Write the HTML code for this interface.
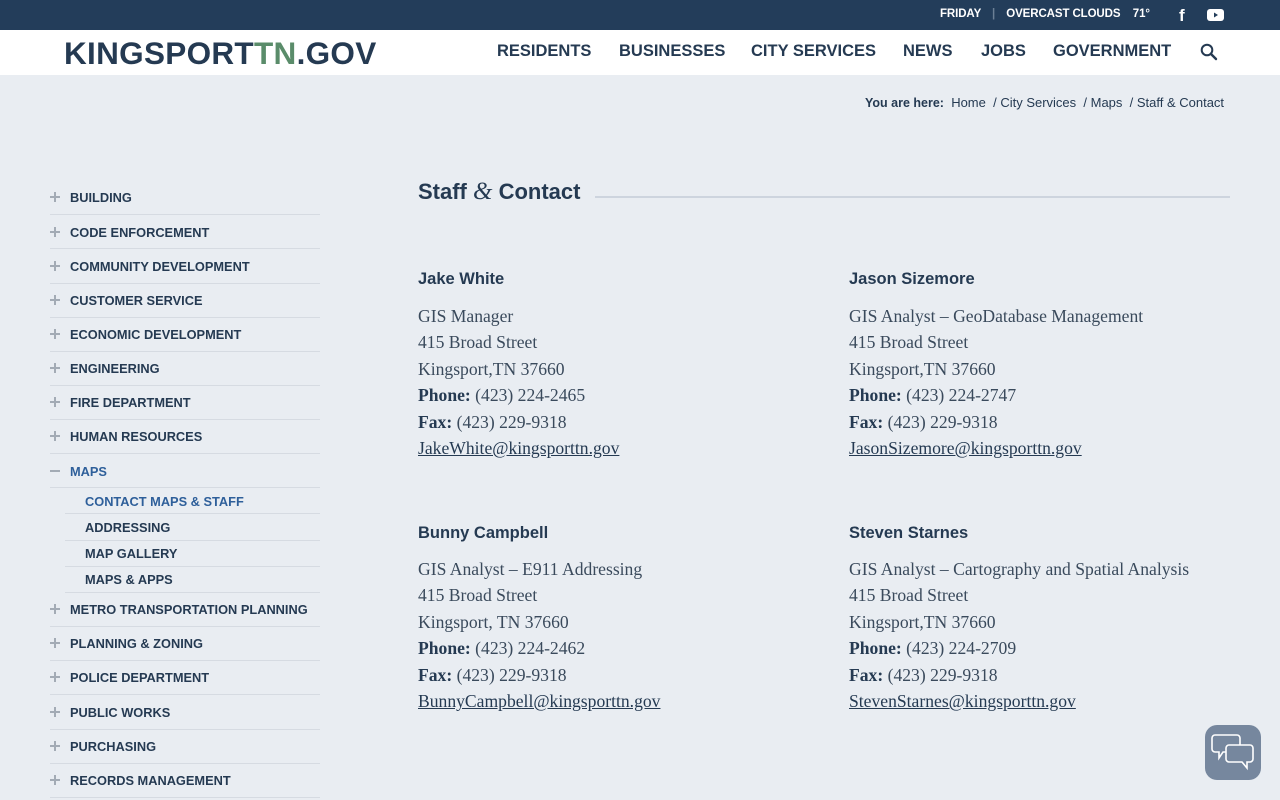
<!DOCTYPE html>
<html><head><meta charset="utf-8"><style>
*{margin:0;padding:0;box-sizing:border-box}
body{width:1280px;height:800px;overflow:hidden;background:#e9edf2;font-family:"Liberation Sans",sans-serif;color:#253a52;position:relative}
.a{position:absolute;white-space:nowrap}
.top{position:absolute;left:0;top:0;width:1280px;height:30px;background:#233d5a}
.hdr{position:absolute;left:0;top:30px;width:1280px;height:45px;background:#fff}
.nav{font-weight:bold;font-size:16.5px;top:42px;color:#253a52}
.mi{font-weight:bold;font-size:12.8px;left:70px;color:#253a52}
.pl{position:absolute;left:50px;width:10px;height:10px}
.pl:before{content:"";position:absolute;left:0;top:4px;width:10px;height:2px;background:#a3abb5}
.pl:after{content:"";position:absolute;left:4px;top:0;width:2px;height:10px;background:#a3abb5}
.ln{position:absolute;height:1px;background:#d6dbe2;width:270px;left:50px}
.sub{left:85px}
.c{font-family:"Liberation Serif",serif;font-size:17.6px;color:#3a4a5c;line-height:26.4px}
.c b{color:#253a52}
.c u{color:#253a52}
.nm{font-weight:bold;font-size:16.5px;color:#253a52}
</style></head><body>
<div class="top"></div>
<div class="a" style="left:940px;top:8px;color:#fff;font-weight:bold;font-size:11.5px;letter-spacing:-0.1px">FRIDAY <span style="color:#6b7f95;margin:0 8px">|</span> OVERCAST CLOUDS &nbsp;&nbsp;&nbsp;71°</div>
<div class="a" style="left:1179px;top:6px;color:#fff;font-weight:bold;font-size:17px">f</div>
<svg class="a" style="left:1207px;top:9px" width="17" height="12" viewBox="0 0 17 12"><rect width="17" height="12" rx="3" fill="#fff"/><path d="M7 3.5L11 6L7 8.5Z" fill="#233d5a"/></svg>
<div class="hdr"></div>
<div class="a" style="left:64px;top:35px;font-weight:bold;font-size:31.5px;letter-spacing:0.3px;color:#253a52">KINGSPORT<span style="color:#5a8c6a">TN</span>.GOV</div>
<div class="a nav" style="left:497px">RESIDENTS</div>
<div class="a nav" style="left:619px">BUSINESSES</div>
<div class="a nav" style="left:751px">CITY SERVICES</div>
<div class="a nav" style="left:903px">NEWS</div>
<div class="a nav" style="left:981px">JOBS</div>
<div class="a nav" style="left:1053px">GOVERNMENT</div>
<svg class="a" style="left:1200px;top:43px" width="18" height="18" viewBox="0 0 18 18"><circle cx="7" cy="7" r="5.3" fill="none" stroke="#253a52" stroke-width="2"/><path d="M11 11L16 16" stroke="#253a52" stroke-width="2.4" stroke-linecap="round"/></svg>
<div class="a" style="left:865px;top:95px;font-size:13px;color:#253a52"><span style="font-weight:bold;font-size:12.5px">You are here:</span>&nbsp; Home &nbsp;/ City Services &nbsp;/ Maps &nbsp;/ Staff &amp; Contact</div>

<div class="a" style="left:418px;top:178px;font-size:22px;font-weight:bold;color:#253a52">Staff <span style="font-family:'Liberation Serif',serif;font-style:italic;font-weight:normal;font-size:25px">&amp;</span> Contact</div>
<div class="a" style="left:595px;top:196px;width:635px;height:2px;background:#cdd4de"></div>

<!-- sidebar -->
<div class="pl" style="top:192px"></div><div class="a mi" style="top:190px">BUILDING</div><div class="ln" style="top:214px"></div>
<div class="pl" style="top:227px"></div><div class="a mi" style="top:225px">CODE ENFORCEMENT</div><div class="ln" style="top:248px"></div>
<div class="pl" style="top:261px"></div><div class="a mi" style="top:259px">COMMUNITY DEVELOPMENT</div><div class="ln" style="top:283px"></div>
<div class="pl" style="top:295px"></div><div class="a mi" style="top:293px">CUSTOMER SERVICE</div><div class="ln" style="top:317px"></div>
<div class="pl" style="top:329px"></div><div class="a mi" style="top:327px">ECONOMIC DEVELOPMENT</div><div class="ln" style="top:351px"></div>
<div class="pl" style="top:363px"></div><div class="a mi" style="top:361px">ENGINEERING</div><div class="ln" style="top:385px"></div>
<div class="pl" style="top:397px"></div><div class="a mi" style="top:395px">FIRE DEPARTMENT</div><div class="ln" style="top:419px"></div>
<div class="pl" style="top:431px"></div><div class="a mi" style="top:429px">HUMAN RESOURCES</div><div class="ln" style="top:453px"></div>
<div class="a" style="left:50px;top:470px;width:10px;height:2px;background:#a3abb5"></div><div class="a mi" style="top:464px;color:#2e5f9a">MAPS</div><div class="ln" style="top:487px"></div>
<div class="a mi sub" style="top:494px;color:#2e5f9a">CONTACT MAPS &amp; STAFF</div><div class="ln" style="top:513px;left:65px;width:255px"></div>
<div class="a mi sub" style="top:520px">ADDRESSING</div><div class="ln" style="top:540px;left:65px;width:255px"></div>
<div class="a mi sub" style="top:546px">MAP GALLERY</div><div class="ln" style="top:566px;left:65px;width:255px"></div>
<div class="a mi sub" style="top:572px">MAPS &amp; APPS</div><div class="ln" style="top:592px;left:65px;width:255px"></div>
<div class="pl" style="top:604px"></div><div class="a mi" style="top:602px">METRO TRANSPORTATION PLANNING</div><div class="ln" style="top:626px"></div>
<div class="pl" style="top:638px"></div><div class="a mi" style="top:636px">PLANNING &amp; ZONING</div><div class="ln" style="top:660px"></div>
<div class="pl" style="top:672px"></div><div class="a mi" style="top:670px">POLICE DEPARTMENT</div><div class="ln" style="top:694px"></div>
<div class="pl" style="top:707px"></div><div class="a mi" style="top:705px">PUBLIC WORKS</div><div class="ln" style="top:729px"></div>
<div class="pl" style="top:741px"></div><div class="a mi" style="top:739px">PURCHASING</div><div class="ln" style="top:763px"></div>
<div class="pl" style="top:775px"></div><div class="a mi" style="top:773px">RECORDS MANAGEMENT</div><div class="ln" style="top:797px"></div>

<!-- contacts -->
<div class="a nm" style="left:418px;top:270px">Jake White</div>
<div class="a c" style="left:418px;top:303px">GIS Manager<br>415 Broad Street<br>Kingsport,TN 37660<br><b>Phone:</b> (423) 224-2465<br><b>Fax:</b> (423) 229-9318<br><u>JakeWhite@kingsporttn.gov</u></div>
<div class="a nm" style="left:849px;top:270px">Jason Sizemore</div>
<div class="a c" style="left:849px;top:303px">GIS Analyst – GeoDatabase Management<br>415 Broad Street<br>Kingsport,TN 37660<br><b>Phone:</b> (423) 224-2747<br><b>Fax:</b> (423) 229-9318<br><u>JasonSizemore@kingsporttn.gov</u></div>
<div class="a nm" style="left:418px;top:524px">Bunny Campbell</div>
<div class="a c" style="left:418px;top:556px">GIS Analyst – E911 Addressing<br>415 Broad Street<br>Kingsport, TN 37660<br><b>Phone:</b> (423) 224-2462<br><b>Fax:</b> (423) 229-9318<br><u>BunnyCampbell@kingsporttn.gov</u></div>
<div class="a nm" style="left:849px;top:524px">Steven Starnes</div>
<div class="a c" style="left:849px;top:556px">GIS Analyst – Cartography and Spatial Analysis<br>415 Broad Street<br>Kingsport,TN 37660<br><b>Phone:</b> (423) 224-2709<br><b>Fax:</b> (423) 229-9318<br><u>StevenStarnes@kingsporttn.gov</u></div>

<svg class="a" style="left:1205px;top:725px" width="56" height="55" viewBox="0 0 56 55"><rect width="56" height="55" rx="12" fill="#76879e"/><path d="M10 10h22a3 3 0 0 1 3 3v11a3 3 0 0 1-3 3H18l-4 6v-6h-4a3 3 0 0 1-3-3V13a3 3 0 0 1 3-3z" fill="#76879e" stroke="#fff" stroke-width="1.6"/><path d="M24 20h21a3 3 0 0 1 3 3v11a3 3 0 0 1-3 3h-3v6l-5-6H24a3 3 0 0 1-3-3V23a3 3 0 0 1 3-3z" fill="#76879e" stroke="#fff" stroke-width="1.6"/></svg>
</body></html>
